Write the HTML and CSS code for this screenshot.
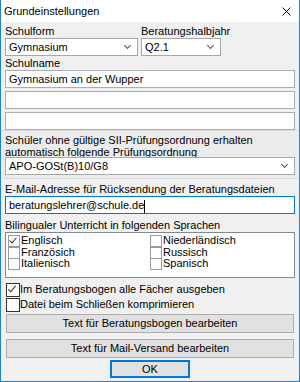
FILE: index.html
```html
<!DOCTYPE html>
<html lang="de">
<head>
    <meta charset="UTF-8">
    <title>Grundeinstellungen</title>
    <link rel="stylesheet" href="styles.css">
</head>
<body>
<div class="window">
    <div class="titlebar">
        <span>Grundeinstellungen</span>
        <svg class="close" width="9" height="9" viewBox="0 0 9 9"><path d="M0.5 0.5L8.5 8.5M8.5 0.5L0.5 8.5" stroke="#000" stroke-width="1"/></svg>
    </div>
    <div class="content">
        <div class="row">
            <div class="field schulform">
                <label>Schulform</label>
                <div class="combo">Gymnasium<span class="arrow"></span></div>
            </div>
            <div class="field halbjahr">
                <label>Beratungshalbjahr</label>
                <div class="combo">Q2.1<span class="arrow"></span></div>
            </div>
        </div>
        <div class="field">
            <label>Schulname</label>
            <div class="input">Gymnasium an der Wupper</div>
            <div class="input"></div>
            <div class="input"></div>
        </div>
        <div class="panel">
            <label>Schüler ohne gültige SII-Prüfungsordnung erhalten<br>automatisch folgende Prüfungsordnung</label>
            <div class="combo">APO-GOSt(B)10/G8<span class="arrow"></span></div>
        </div>
        <div class="field">
            <label>E-Mail-Adresse für Rücksendung der Beratungsdateien</label>
            <div class="input focus">beratungslehrer@schule.de<span class="caret"></span></div>
        </div>
        <div class="field">
            <label>Bilingualer Unterricht in folgenden Sprachen</label>
            <div class="listbox">
                <div class="col">
                    <div class="check on">Englisch</div>
                    <div class="check">Französich</div>
                    <div class="check">Italienisch</div>
                </div>
                <div class="col">
                    <div class="check">Niederländisch</div>
                    <div class="check">Russisch</div>
                    <div class="check">Spanisch</div>
                </div>
            </div>
        </div>
        <div class="options">
            <div class="check on">Im Beratungsbogen alle Fächer ausgeben</div>
            <div class="check">Datei beim Schließen komprimieren</div>
        </div>
        <div class="button first">Text für Beratungsbogen bearbeiten</div>
        <div class="button second">Text für Mail-Versand bearbeiten</div>
        <div class="button ok">OK</div>
    </div>
</div>
</body>
</html>
```

FILE: styles.css
```css
* {
    box-sizing: border-box;
}

body {
    margin: 0;
    font-family: "Liberation Sans", Arial, sans-serif;
    font-size: 11px;
    color: #000;
}

.window {
    width: 300px;
    height: 382px;
    border: 1px solid #1883d7;
    border-top: none;
    background-color: #f0f0f0;
    display: flex;
    flex-direction: column;
    overflow: hidden;
}

.titlebar {
    height: 22px;
    flex-shrink: 0;
    background-color: #fff;
    display: flex;
    align-items: center;
    justify-content: space-between;
    padding: 0 8px 0 3px;
}

.content {
    padding: 2px 4px 0 4px;
    display: flex;
    flex-direction: column;
}

label {
    display: block;
    height: 14px;
    line-height: 15px;
    white-space: nowrap;
}

.row {
    display: flex;
    gap: 3px;
}

.schulform {
    width: 133px;
}

.halbjahr {
    width: 80px;
}

.combo, .input {
    position: relative;
    height: 18px;
    background-color: #fff;
    border: 1px solid #abadb3;
    padding: 0 3px;
    line-height: 16px;
    white-space: nowrap;
}

.combo {
    border-color: #a8a8a8;
}

.input {
    margin-bottom: 3px;
}

.input:last-child {
    margin-bottom: 0;
}

.input.focus {
    border-color: #0078d7;
}

.caret {
    display: inline-block;
    width: 1px;
    height: 13px;
    background-color: #000;
    vertical-align: middle;
}

.arrow {
    position: absolute;
    right: 7px;
    top: 4px;
    width: 5px;
    height: 5px;
    border-right: 1px solid #555;
    border-bottom: 1px solid #555;
    transform: rotate(45deg);
}

.panel {
    margin: 0 -3px;
    padding: 2px 3px 3px 3px;
    background-color: #ececec;
    border-top: 1px solid #d9d9d9;
    border-bottom: 1px solid #d9d9d9;
}

.panel label {
    height: 24px;
    line-height: 12px;
    padding-top: 1px;
}

.panel + .field {
    margin-top: 3px;
}

.panel + .field + .field label {
    height: 18px;
    line-height: 22px;
}

.listbox {
    height: 46px;
    background-color: #fff;
    border: 1px solid #828790;
    display: flex;
    padding: 1px 2px;
}

.col {
    width: 145px;
}

.check {
    position: relative;
    height: 11.5px;
    line-height: 12px;
    padding-left: 13px;
    white-space: nowrap;
}

.check::before {
    content: "";
    position: absolute;
    left: 0;
    top: 1px;
    width: 10px;
    height: 10px;
    border: 1px solid #9a9a9a;
    background-color: #fff;
}

.check.on::after {
    content: "";
    position: absolute;
    left: 3px;
    top: 2px;
    width: 3px;
    height: 6px;
    border-right: 1px solid #333;
    border-bottom: 1px solid #333;
    transform: rotate(40deg);
}

.options {
    margin-top: 4px;
}

.options .check {
    height: 15px;
    line-height: 15px;
    padding-left: 15px;
}

.options .check::before {
    width: 12px;
    height: 12px;
    top: 1px;
    left: 1px;
    border-color: #333;
}

.options .check.on::after {
    left: 5px;
    top: 2px;
    width: 3px;
    height: 7px;
}

.button {
    height: 19px;
    line-height: 17px;
    text-align: center;
    background-color: #e1e1e1;
    border: 1px solid #adadad;
    white-space: nowrap;
}

.first, .second {
    margin: 0 1px;
}

.first {
    margin-top: 2px;
}

.second {
    margin-top: 6px;
}

.ok {
    width: 80px;
    height: 18px;
    margin: 2px auto 0 auto;
    border: 2px solid #0078d7;
    line-height: 14px;
}
```
